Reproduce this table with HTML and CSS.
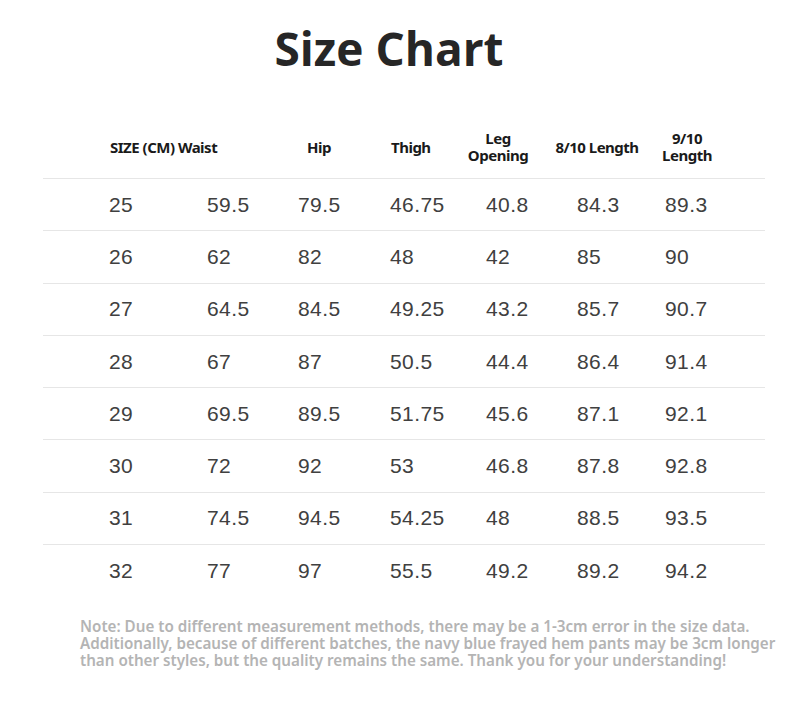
FILE: index.html
```html
<!DOCTYPE html>
<html lang="en">
<head>
<meta charset="utf-8">
<title>Size Chart</title>
<link rel="stylesheet" href="styles.css">
</head>
<body>
<main class="page">
  <h1 class="title">Size Chart</h1>
  <section class="chart">
    <div class="head">
      <div class="hcell">SIZE (CM) Waist</div>
      <div class="hcell">Hip</div>
      <div class="hcell">Thigh</div>
      <div class="hcell center">Leg<br>Opening</div>
      <div class="hcell center">8/10 Length</div>
      <div class="hcell center">9/10<br>Length</div>
    </div>
    <div class="row"><span>25</span><span>59.5</span><span>79.5</span><span>46.75</span><span>40.8</span><span>84.3</span><span>89.3</span></div>
    <div class="row"><span>26</span><span>62</span><span>82</span><span>48</span><span>42</span><span>85</span><span>90</span></div>
    <div class="row"><span>27</span><span>64.5</span><span>84.5</span><span>49.25</span><span>43.2</span><span>85.7</span><span>90.7</span></div>
    <div class="row"><span>28</span><span>67</span><span>87</span><span>50.5</span><span>44.4</span><span>86.4</span><span>91.4</span></div>
    <div class="row"><span>29</span><span>69.5</span><span>89.5</span><span>51.75</span><span>45.6</span><span>87.1</span><span>92.1</span></div>
    <div class="row"><span>30</span><span>72</span><span>92</span><span>53</span><span>46.8</span><span>87.8</span><span>92.8</span></div>
    <div class="row"><span>31</span><span>74.5</span><span>94.5</span><span>54.25</span><span>48</span><span>88.5</span><span>93.5</span></div>
    <div class="row last"><span>32</span><span>77</span><span>97</span><span>55.5</span><span>49.2</span><span>89.2</span><span>94.2</span></div>
  </section>
  <p class="note">Note: Due to different measurement methods, there may be a 1-3cm error in the size data.<br>Additionally, because of different batches, the navy blue frayed hem pants may be 3cm longer<br>than other styles, but the quality remains the same. Thank you for your understanding!</p>
</main>
</body>
</html>
```

FILE: styles.css
```css
html, body {
  margin: 0;
  padding: 0;
  background: #ffffff;
}

.page {
  width: 790px;
  height: 706px;
  overflow: hidden;
}

.title {
  margin: 0;
  padding: 25px 12px 0 0;
  height: 122px;
  box-sizing: border-box;
  text-align: center;
  font-family: "Open Sans", "Noto Sans", sans-serif;
  font-weight: 700;
  font-size: 46px;
  line-height: 46px;
  color: #262626;
}

.chart {
  margin: 0 25px 0 43px;
}

.head {
  display: grid;
  grid-template-columns: 197px 84px 69px 76px 122px 58px;
  align-items: center;
  height: 57px;
  padding: 0 0 6px 67px;
  box-sizing: border-box;
  border-bottom: 1px solid #e6e6e6;
  font-family: "Noto Sans", sans-serif;
  font-weight: 700;
  font-size: 15px;
  line-height: 17px;
  letter-spacing: -0.5px;
  color: #1a1a1a;
}

.hcell {
  white-space: nowrap;
}

.hcell.center {
  text-align: center;
}

.row {
  display: grid;
  grid-template-columns: 98px 91px 92px 96px 91px 88px 1fr;
  align-items: center;
  height: 52.3px;
  padding-left: 66px;
  box-sizing: border-box;
  border-bottom: 1px solid #e6e6e6;
  font-family: "Liberation Sans", Arial, sans-serif;
  font-size: 21px;
  letter-spacing: 0.4px;
  color: #404040;
}

.row.last {
  border-bottom: none;
}

.note {
  margin: 21px 0 0 80px;
  font-family: "Noto Sans", sans-serif;
  font-weight: 600;
  font-size: 15.2px;
  line-height: 17px;
  color: #b4b4b4;
  white-space: nowrap;
}
```
